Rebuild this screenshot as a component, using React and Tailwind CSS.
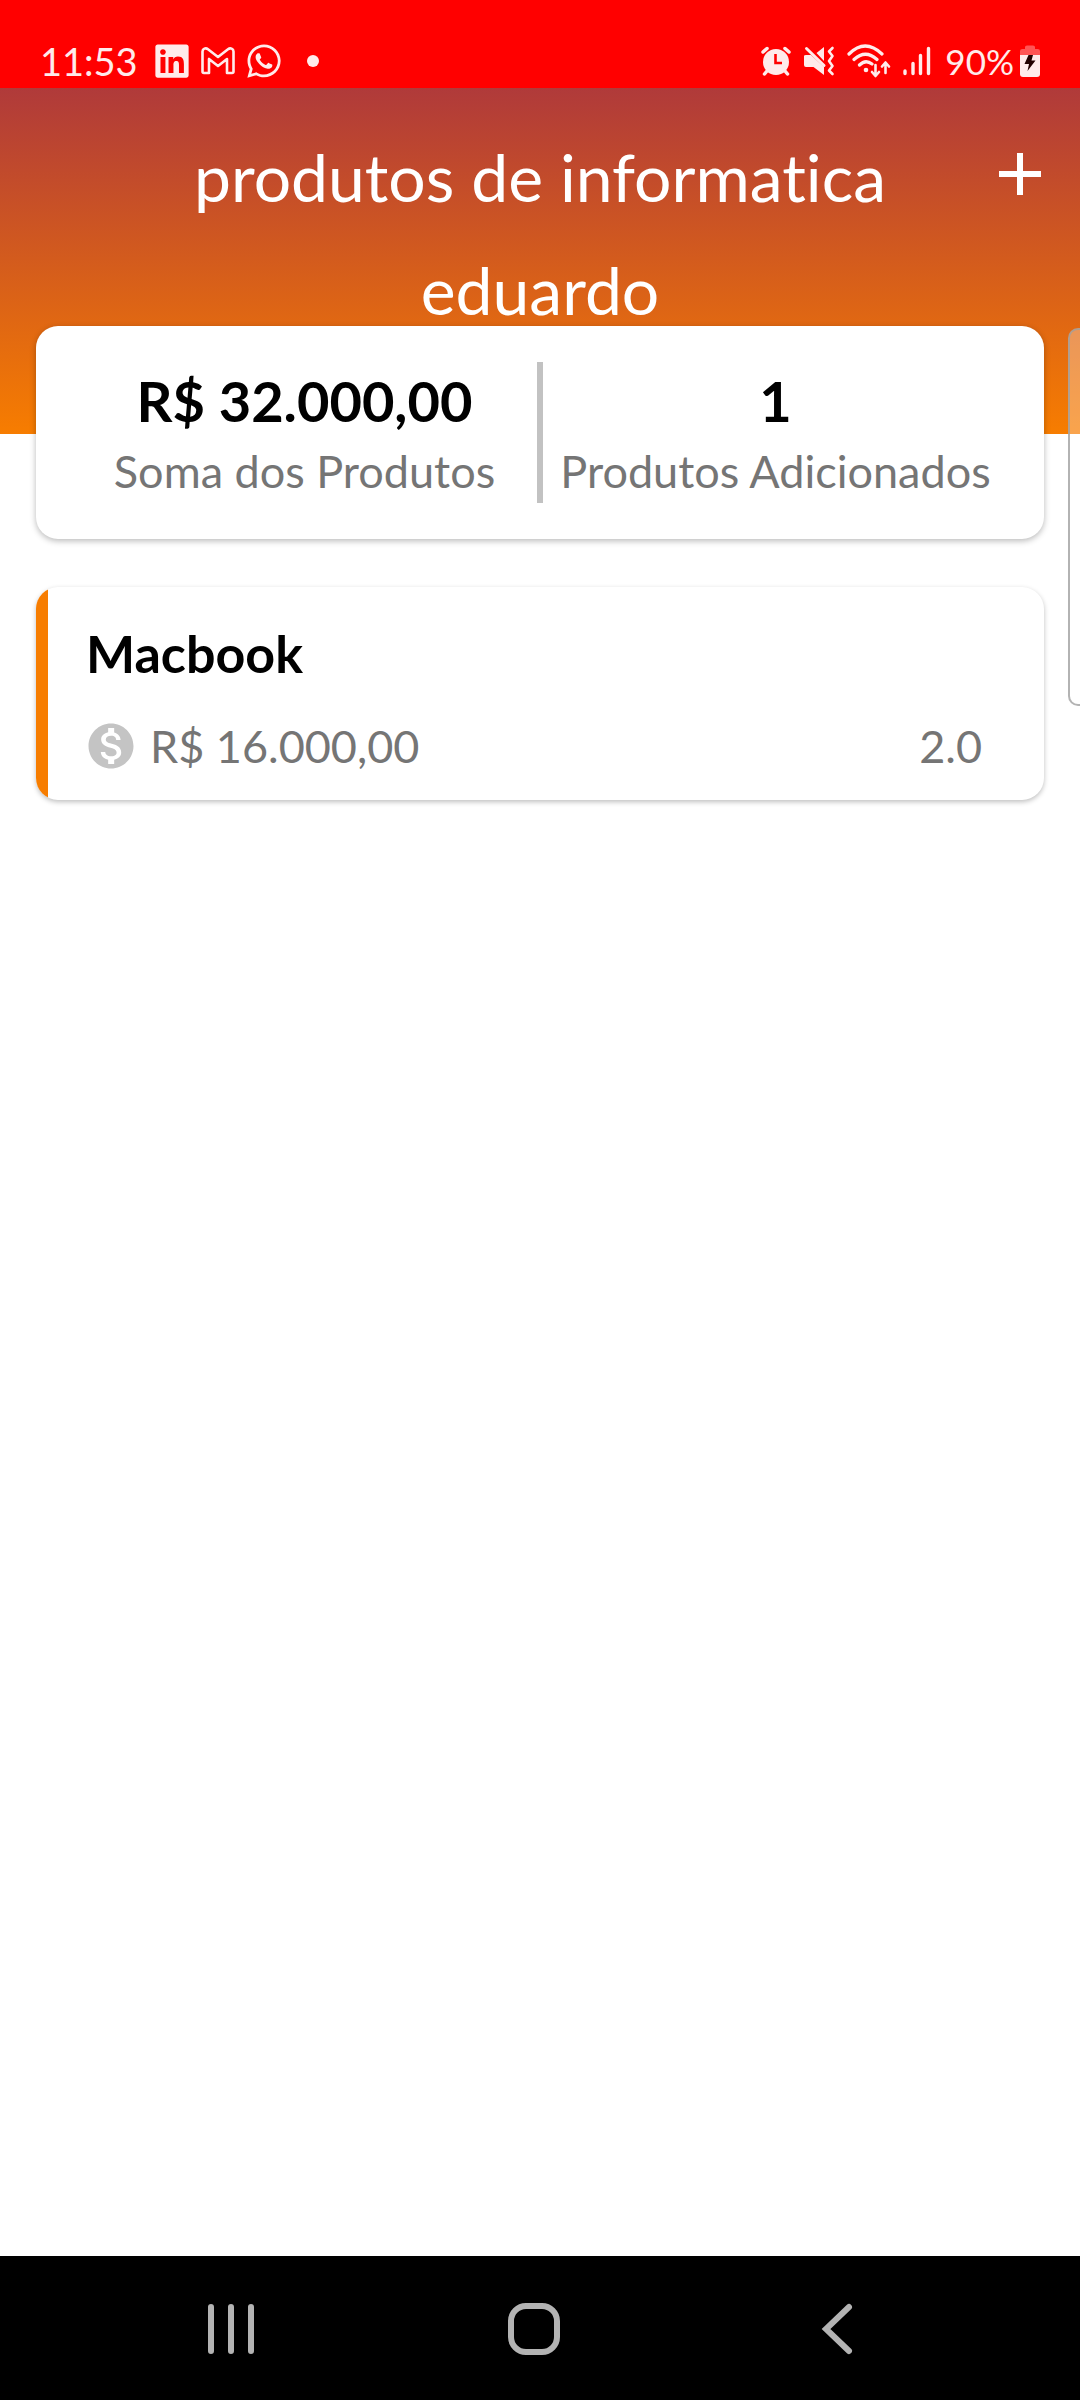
import { FaLinkedin, FaWhatsapp } from "react-icons/fa";
import { MdAdd, MdMonetizationOn } from "react-icons/md";

const products = [{ name: "Macbook", price: "R$ 16.000,00", amount: "2.0" }];

function GmailIcon() {
  return (
    <svg viewBox="0 0 34 28" className="h-7 w-[34px]" fill="none" stroke="currentColor" strokeWidth="2.6" strokeLinejoin="round" aria-hidden="true">
      <path d="M1.500 4.500C1.500 1.600 4.700 .4 7 2.200L17 10L27 2.200C29.300 .4 32.500 1.600 32.500 4.500V24.500Q32.500 26 31 26H26V12L17 19L8 12V26H3Q1.500 26 1.500 24.500Z" />
    </svg>
  );
}

function AlarmIcon() {
  return (
    <svg viewBox="0 0 30 30" className="size-[30px]" aria-hidden="true">
      <circle cx="15" cy="16" r="13" fill="currentColor" />
      <path d="M2 6L6 2.500M28 6L24 2.500M6 25L3.500 28M24 25L26.500 28" stroke="currentColor" strokeWidth="3.500" strokeLinecap="round" />
      <path d="M14.500 8V17H21" fill="none" stroke="#f00" strokeWidth="2.600" />
    </svg>
  );
}

function MuteVibrateIcon() {
  return (
    <svg viewBox="0 0 32 30" className="h-[30px] w-8" aria-hidden="true">
      <path d="M1 10Q1 9 3 9H8L21 21V29L10.500 21H3Q1 21 1 19Z M13.500 7L21 1V15Z" fill="currentColor" />
      <path d="M3.500 2.500L21 19.500" fill="none" stroke="currentColor" strokeWidth="3" strokeLinecap="round" />
      <path d="M29.500 2L26 5.500L29.500 10L26 15L29.500 20L26 24.500L29.500 28" fill="none" stroke="currentColor" strokeWidth="2.600" strokeLinecap="round" strokeLinejoin="round" />
    </svg>
  );
}

function WifiIcon() {
  return (
    <svg viewBox="0 0 44 34" className="h-[34px] w-11" fill="none" stroke="currentColor" strokeWidth="3.200" strokeLinecap="round" strokeLinejoin="round" aria-hidden="true">
      <path d="M2 10Q18 -6 35 10M7 15.500Q18.500 5 30 15.500M12.500 21Q18.500 15 25 20" />
      <circle cx="19" cy="26" r="2.300" fill="currentColor" stroke="none" />
      <path d="M28.500 21V31.500M25 28L28.500 32L32 28M38.500 29V19M35 22.500L38.500 18.500L42 22.500" strokeWidth="2.600" />
    </svg>
  );
}

function SignalIcon() {
  return (
    <svg viewBox="0 0 28 30" className="h-[30px] w-7" stroke="currentColor" strokeWidth="3.400" strokeLinecap="round" aria-hidden="true">
      <path d="M2 25V27.500M10 17.500V27.500M17.500 9.500V27.500M25.500 2.500V27.500" />
    </svg>
  );
}

function BatteryIcon() {
  return (
    <svg viewBox="0 0 20 32" className="h-8 w-5" aria-hidden="true">
      <path d="M0 10V6Q0 4 2.500 4H5V2Q5 .5 7 .5H13Q15 .5 15 2V4H17.500Q20 4 20 6V10Z" fill="#ff5454" />
      <path d="M0 10H20V29Q20 32 17 32H3Q0 32 0 29Z" fill="currentColor" />
      <path d="M8.500 10H13L11.500 15.500H15.500L7.500 26L9 19H4.500Z" fill="#200" />
    </svg>
  );
}

function StatusBar() {
  return (
    <div className="flex h-[88px] items-end justify-between bg-[#ff0000] pr-10 pl-10 text-[#ffebeb]">
      <div className="flex h-[54px] items-center">
        <span className="w-[113px] text-[38px] leading-none">11:53</span>
        <div className="flex items-center gap-2.5">
          <FaLinkedin className="size-[38px]" aria-hidden="true" />
          <GmailIcon />
          <FaWhatsapp className="size-[38px]" aria-hidden="true" />
        </div>
        <span className="ml-6 size-3 rounded-full bg-current" />
      </div>
      <div className="flex h-[54px] items-center">
        <div className="flex items-center gap-3">
          <AlarmIcon />
          <MuteVibrateIcon />
          <WifiIcon />
        </div>
        <div className="ml-3 flex items-center gap-3.5">
          <SignalIcon />
          <span className="text-[35px] leading-none">90%</span>
        </div>
        <span className="ml-1.5">
          <BatteryIcon />
        </span>
      </div>
    </div>
  );
}

function Stat({ value, label }) {
  return (
    <div className="flex flex-1 flex-col items-center">
      <dd className="order-first text-[56px] leading-[78px] font-bold text-black">{value}</dd>
      <dt className="text-[45px] leading-[63px] whitespace-nowrap text-[#757575]">{label}</dt>
    </div>
  );
}

function ProductCard({ product }) {
  return (
    <li className="flex overflow-hidden rounded-[22px] bg-white shadow-[0_2px_5px_rgba(0,0,0,0.25)]">
      <div className="w-3 bg-[#f77d00]" />
      <div className="flex-1 px-[38px] pt-7 pb-[15px]">
        <h2 className="text-[52px] leading-[76px] font-bold text-black">{product.name}</h2>
        <div className="mt-4 flex items-center justify-between pr-6 text-[45px] leading-[78px] text-[#757575]">
          <span className="flex items-center gap-3">
            <MdMonetizationOn className="-ml-0.5 size-[54px] text-[#c4c4c4]" aria-hidden="true" />
            {product.price}
          </span>
          <span>{product.amount}</span>
        </div>
      </div>
    </li>
  );
}

function NavBar() {
  return (
    <nav className="grid h-36 grid-cols-3 items-center bg-black pt-0.5 pr-[92px] pl-20 text-[#b3b3b3]">
      <button type="button" aria-label="Recentes" className="flex justify-center">
        <svg viewBox="0 0 60 60" className="size-[60px]" stroke="currentColor" strokeWidth="6" strokeLinecap="round">
          <path d="M10 8V52M30 8V52M50 8V52" />
        </svg>
      </button>
      <button type="button" aria-label="Início" className="flex justify-center">
        <svg viewBox="0 0 60 60" className="size-[60px]" fill="none" stroke="currentColor" strokeWidth="6">
          <rect x="7" y="7" width="46" height="46" rx="15" />
        </svg>
      </button>
      <button type="button" aria-label="Voltar" className="flex justify-center">
        <svg viewBox="0 0 60 60" className="size-[60px]" fill="none" stroke="currentColor" strokeWidth="6" strokeLinecap="round">
          <path d="M42 8L19 30L42 52" />
        </svg>
      </button>
    </nav>
  );
}

export default function App() {
  return (
    <div className="relative flex min-h-screen flex-col overflow-hidden bg-white font-['Lato',sans-serif] [font-variant-ligatures:none]">
      <StatusBar />
      <header className="grid grid-cols-[72px_1fr_72px] bg-linear-to-b/srgb from-[#b03a3a] to-[#f77d00] px-6 pt-8 pb-22">
        <h1 className="col-start-2 text-center text-[66px] leading-[113px] text-white">
          produtos de informatica
          <br />
          eduardo
        </h1>
        <button type="button" aria-label="Adicionar produto" className="mt-[18px] self-start text-white">
          <MdAdd className="size-[72px]" />
        </button>
      </header>
      <main className="flex-1 px-9">
        <dl className="-mt-27 flex items-start rounded-[22px] bg-white px-9 py-9 shadow-[0_2px_6px_rgba(0,0,0,0.28)]">
          <Stat value="R$ 32.000,00" label="Soma dos Produtos" />
          <div className="w-1.5 self-stretch bg-[#c2c2c2]" />
          <Stat value="1" label="Produtos Adicionados" />
        </dl>
        <ul className="mt-12">
          {products.map((product) => (
            <ProductCard key={product.name} product={product} />
          ))}
        </ul>
      </main>
      <NavBar />
      <div className="absolute top-[328px] right-0 h-[378px] w-3 rounded-l-[10px] border-2 border-r-0 border-[#a0a0a0]/80 bg-white/30" />
    </div>
  );
}
